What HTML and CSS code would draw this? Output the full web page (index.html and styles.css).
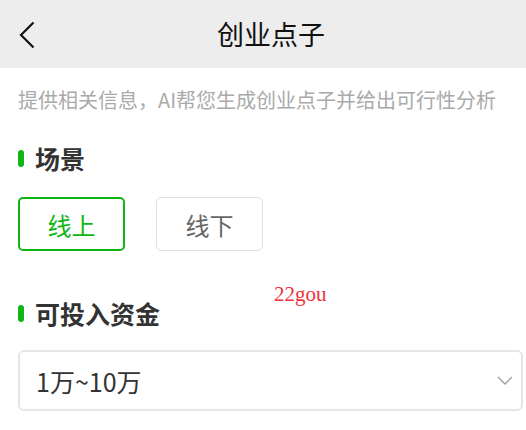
FILE: index.html
```html
<!DOCTYPE html>
<html lang="zh-CN">
<head>
    <meta charset="UTF-8">
    <meta name="viewport" content="width=device-width, initial-scale=1.0">
    <title>创业点子</title>
    <link rel="stylesheet" href="styles.css">
</head>
<body>
    <div class="header">
        <span class="back">
            <svg width="16" height="28" viewBox="0 0 16 28">
                <path d="M14.5 1.5 L2 14 L14.5 26.5" fill="none" stroke="#111" stroke-width="2.2"/>
            </svg>
        </span>
        <h1>创业点子</h1>
    </div>
    <div class="content">
        <p class="intro">提供相关信息，AI帮您生成创业点子并给出可行性分析</p>

        <h2 class="section-title">场景</h2>
        <div class="options">
            <button type="button" class="option active">线上</button>
            <button type="button" class="option">线下</button>
        </div>

        <h2 class="section-title funds">可投入资金</h2>
        <div class="select">
            <span>1万~10万</span>
            <svg width="16" height="10" viewBox="0 0 16 10">
                <path d="M1 1 L8 8 L15 1" fill="none" stroke="#a0a0a0" stroke-width="1.4"/>
            </svg>
        </div>

        <span class="watermark">22gou</span>
    </div>
</body>
</html>
```

FILE: styles.css
```css
body {
    margin: 0;
    padding: 0;
    background-color: #fff;
    font-family: "Noto Sans CJK SC", "Noto Sans", sans-serif;
    color: #333;
}
.header {
    position: relative;
    height: 68px;
    background-color: #ededed;
    display: flex;
    align-items: center;
    justify-content: center;
}
.back {
    position: absolute;
    left: 19px;
    top: 21px;
    height: 28px;
}
.header h1 {
    margin: 0 0 0 16px;
    font-size: 27px;
    font-weight: normal;
    color: #111;
    line-height: 30px;
}
.content {
    position: relative;
    padding: 18px 3px 0 18px;
}
.intro {
    margin: 0;
    font-size: 20px;
    line-height: 28px;
    color: #aaa;
    white-space: nowrap;
}
.section-title {
    display: flex;
    align-items: center;
    gap: 11px;
    margin: 29px 0 0 0;
    font-size: 25px;
    line-height: 30px;
    font-weight: bold;
    color: #333;
}
.section-title::before {
    content: "";
    width: 6px;
    height: 17px;
    border-radius: 3px;
    background-color: #11b514;
}
.section-title.funds {
    margin-top: 47px;
}
.options {
    display: flex;
    gap: 31px;
    margin-top: 24px;
}
.option {
    width: 107px;
    height: 54px;
    border: 1.5px solid #dcdfe6;
    border-radius: 5px;
    background-color: #fff;
    font-family: inherit;
    font-size: 24px;
    color: #666;
    padding: 0;
    cursor: pointer;
}
.option.active {
    border: 2px solid #11b514;
    color: #11b514;
}
.select {
    display: flex;
    align-items: center;
    justify-content: space-between;
    box-sizing: border-box;
    height: 61px;
    margin-top: 22px;
    padding: 0 8px 0 16px;
    border: 2px solid #e6e6e6;
    border-radius: 6px;
    font-size: 25px;
    color: #333;
}
.watermark {
    position: absolute;
    left: 274px;
    top: 214px;
    font-family: "Liberation Serif", serif;
    font-size: 21px;
    color: #f0303a;
}
```
